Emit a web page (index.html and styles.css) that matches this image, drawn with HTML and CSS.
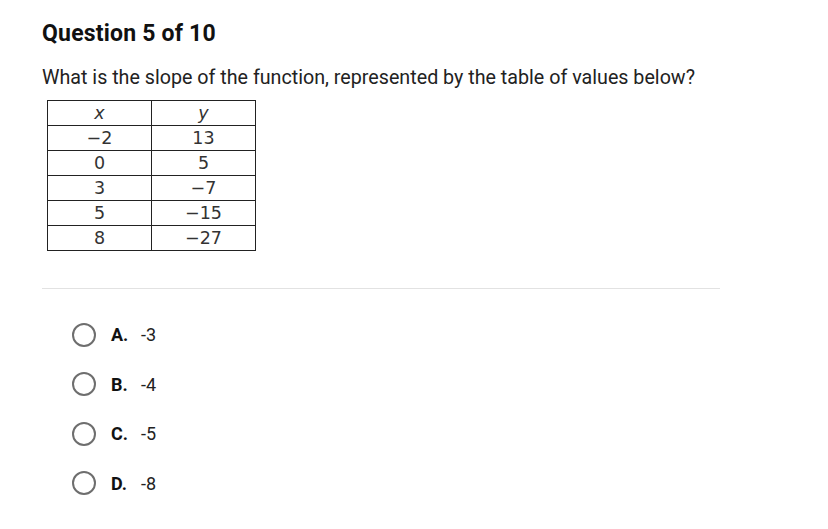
FILE: index.html
```html
<!DOCTYPE html>
<html>
<head>
<meta charset="utf-8">
<link rel="stylesheet" href="styles.css">
</head>
<body>
<div class="page">
  <h1 class="title">Question 5 of 10</h1>
  <p class="prompt">What is the slope of the function, represented by the table of values below?</p>
  <table class="values">
    <tr><td><i>x</i></td><td><i>y</i></td></tr>
    <tr><td>−2</td><td>13</td></tr>
    <tr><td>0</td><td>5</td></tr>
    <tr><td>3</td><td>−7</td></tr>
    <tr><td>5</td><td>−15</td></tr>
    <tr><td>8</td><td>−27</td></tr>
  </table>
  <hr class="rule">
  <ul class="options">
    <li class="option"><span class="radio"></span><b>A.</b><span class="val">-3</span></li>
    <li class="option"><span class="radio"></span><b>B.</b><span class="val">-4</span></li>
    <li class="option"><span class="radio"></span><b>C.</b><span class="val">-5</span></li>
    <li class="option"><span class="radio"></span><b>D.</b><span class="val">-8</span></li>
  </ul>
</div>
</body>
</html>
```
FILE: styles.css
```css
html, body { margin: 0; padding: 0; background: #fff; }
body { font-family: Roboto, "Liberation Sans", sans-serif; color: #212121; }
.page { padding: 20px 0 0 42px; width: 678px; }
.title { margin: 0; font-size: 23px; font-weight: 700; line-height: 28px; color: #111; letter-spacing: 0.2px; }
.prompt { margin: 18px 0 0; font-size: 19.7px; line-height: 24px; color: #222; }
.values {
  margin: 10px 0 0 5px;
  border-collapse: collapse;
  font-family: "DejaVu Sans", Verdana, sans-serif;
  font-size: 17.5px;
  color: #333;
}
.values td {
  border: 1.5px solid #222;
  width: 103px;
  height: 24px;
  padding: 0;
  text-align: center;
  line-height: 24px;
}
.rule { margin: 37px 0 0; border: 0; border-top: 1px solid #e2e2e2; }
.options { list-style: none; margin: 21px 0 0; padding: 0 0 0 30px; }
.option { display: flex; align-items: center; height: 49.5px; font-size: 18px; color: #222; }
.radio {
  width: 20px; height: 20px; border: 2px solid #6e6e6e; border-radius: 50%;
  margin-right: 15px;
}
.option b { font-weight: 700; width: 30px; color: #111; }
```
